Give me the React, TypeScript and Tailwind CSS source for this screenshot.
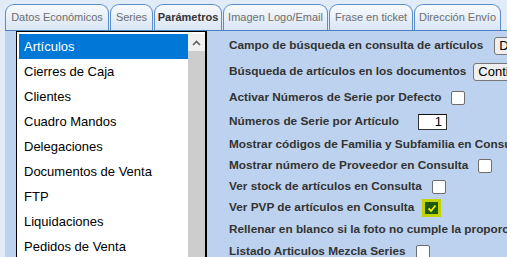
import React from "react"

const tabs = [
  { label: "Datos Económicos", w: "w-[104px]" },
  { label: "Series", w: "w-[43px]" },
  { label: "Parámetros", w: "w-[68px]", active: true },
  { label: "Imagen Logo/Email", w: "w-[105px]" },
  { label: "Frase en ticket", w: "w-[84px]" },
  { label: "Dirección Envío", w: "w-[87px]" },
]

const items = [
  "Artículos",
  "Cierres de Caja",
  "Clientes",
  "Cuadro Mandos",
  "Delegaciones",
  "Documentos de Venta",
  "FTP",
  "Liquidaciones",
  "Pedidos de Venta",
]

const Box = ({ checked = false }: { checked?: boolean }) => {
  if (checked) {
    return (
      <div className="w-[19px] h-[18px] bg-[#c3d300] flex items-center justify-center shrink-0">
        <div className="w-[13px] h-[12px] bg-[#1d5a0c] flex items-center justify-center">
          <svg width="10" height="9" viewBox="0 0 10 9">
            <path d="M1.5 4.5 L4 7 L8.5 1.5" fill="none" stroke="#f2f200" strokeWidth="1.8" />
          </svg>
        </div>
      </div>
    )
  }
  return <div className="w-[14px] h-[14px] bg-white border-[1.5px] border-[#6e6e6e] rounded-[2px] shrink-0"></div>
}

const Btn = ({ text }: { text: string }) => (
  <div className="h-[18px] px-[4px] flex items-center bg-[#efefef] border border-[#767676] rounded-[3px] text-[13px] text-black font-normal shrink-0">
    {text}
  </div>
)

const Row = ({ h, label, gap, children }: { h: string; label: string; gap?: string; children?: React.ReactNode }) => (
  <div className={`${h} shrink-0 flex items-center whitespace-nowrap ${gap ?? "gap-[10px]"}`}>
    <span>{label}</span>
    {children}
  </div>
)

export default function App() {
  return (
    <div className="w-[507px] h-[257px] overflow-hidden bg-[#e2ecf8] pl-[5px] pt-[4px] flex flex-col" style={{ fontFamily: '"Liberation Sans", Arial, sans-serif' }}>
      <div className="flex gap-[1px] h-[26px] shrink-0">
        {tabs.map((t) => (
          <div
            key={t.label}
            className={`${t.w} h-full rounded-t-[9px] border border-b-0 border-[#5b8dcb] bg-gradient-to-b from-[#f7fafd] to-[#d9e6f4] flex items-center justify-center text-[11px] ${t.active ? "font-bold text-[#333]" : "text-[#6e6e6e]"}`}
          >
            {t.label}
          </div>
        ))}
      </div>
      <div className="flex-1 bg-[#bcd2ee] border-t border-[#4a7fc1] flex min-h-0">
        <div className="ml-[11px] w-[191px] h-[240px] bg-white border border-black border-r-2 flex pt-[2px] pl-[2px] shrink-0">
          <div className="flex-1 flex flex-col">
            {items.map((it, i) => (
              <div
                key={it}
                className={`h-[25px] shrink-0 flex items-center pl-[5px] text-[13px] ${i === 0 ? "bg-[#0078d7] text-white" : "text-black"}`}
              >
                {it}
              </div>
            ))}
          </div>
          <div className="w-[17px] flex flex-col">
            <div className="h-[17px] bg-[#f0f0f0] flex items-center justify-center">
              <svg width="9" height="6" viewBox="0 0 9 6">
                <path d="M1 5 L4.5 1.5 L8 5" fill="none" stroke="#606060" strokeWidth="1.6" />
              </svg>
            </div>
            <div className="flex-1 bg-[#cdcdcd]"></div>
          </div>
        </div>
        <div className="ml-[22px] pt-[2px] flex flex-col text-[11.8px] font-bold text-[#333]">
          <Row h="h-[26px]" label="Campo de búsqueda en consulta de artículos" gap="gap-[11px]">
            <Btn text="Descripción" />
          </Row>
          <Row h="h-[26px]" label="Búsqueda de artículos en los documentos" gap="gap-[7px]">
            <Btn text="Contiene" />
          </Row>
          <Row h="h-[25px]" label="Activar Números de Serie por Defecto">
            <Box />
          </Row>
          <Row h="h-[23px]" label="Números de Serie por Artículo" gap="gap-[19px]">
            <div className="w-[29px] h-[16px] bg-white border border-[#333] border-t-[#111] flex items-center justify-end pr-[4px] text-[13px] font-normal text-black">
              1
            </div>
          </Row>
          <Row h="h-[23px]" label="Mostrar códigos de Familia y Subfamilia en Consulta" />
          <Row h="h-[20px]" label="Mostrar número de Proveedor en Consulta">
            <Box />
          </Row>
          <Row h="h-[21px]" label="Ver stock de artículos en Consulta">
            <Box />
          </Row>
          <Row h="h-[22px]" label="Ver PVP de artículos en Consulta" gap="gap-[8px]">
            <Box checked />
          </Row>
          <Row h="h-[22px]" label="Rellenar en blanco si la foto no cumple la proporción" />
          <Row h="h-[22px]" label="Listado Articulos Mezcla Series">
            <Box />
          </Row>
        </div>
      </div>
    </div>
  )
}
